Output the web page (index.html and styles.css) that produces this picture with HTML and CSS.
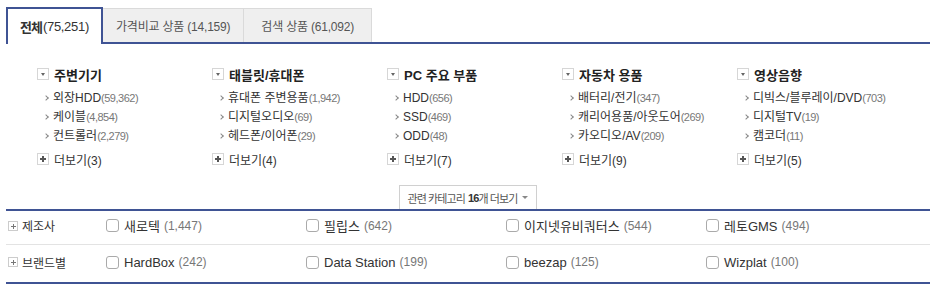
FILE: index.html
```html
<!DOCTYPE html>
<html lang="ko">
<head>
  <meta charset="UTF-8">
  <title>카테고리 필터</title>
  <link rel="stylesheet" href="styles.css">
</head>
<body>
  <div class="wrap">
    <ul class="tabs">
      <li class="tab active"><b>전체</b> (75,251)</li>
      <li class="tab">가격비교 상품 (14,159)</li>
      <li class="tab">검색 상품 (61,092)</li>
    </ul>

    <div class="cats">
      <div class="col">
        <div class="cat-head"><span class="fold"></span>주변기기</div>
        <ul class="items">
          <li>외장HDD<span class="num">(59,362)</span></li>
          <li>케이블<span class="num">(4,854)</span></li>
          <li>컨트롤러<span class="num">(2,279)</span></li>
        </ul>
        <div class="more"><span class="plus"></span>더보기(3)</div>
      </div>
      <div class="col">
        <div class="cat-head"><span class="fold"></span>태블릿/휴대폰</div>
        <ul class="items">
          <li>휴대폰 주변용품<span class="num">(1,942)</span></li>
          <li>디지털오디오<span class="num">(69)</span></li>
          <li>헤드폰/이어폰<span class="num">(29)</span></li>
        </ul>
        <div class="more"><span class="plus"></span>더보기(4)</div>
      </div>
      <div class="col">
        <div class="cat-head"><span class="fold"></span>PC 주요 부품</div>
        <ul class="items">
          <li>HDD<span class="num">(656)</span></li>
          <li>SSD<span class="num">(469)</span></li>
          <li>ODD<span class="num">(48)</span></li>
        </ul>
        <div class="more"><span class="plus"></span>더보기(7)</div>
      </div>
      <div class="col">
        <div class="cat-head"><span class="fold"></span>자동차 용품</div>
        <ul class="items">
          <li>배터리/전기<span class="num">(347)</span></li>
          <li>캐리어용품/아웃도어<span class="num">(269)</span></li>
          <li>카오디오/AV<span class="num">(209)</span></li>
        </ul>
        <div class="more"><span class="plus"></span>더보기(9)</div>
      </div>
      <div class="col">
        <div class="cat-head"><span class="fold"></span>영상음향</div>
        <ul class="items">
          <li>디빅스/블루레이/DVD<span class="num">(703)</span></li>
          <li>디지털TV<span class="num">(19)</span></li>
          <li>캠코더<span class="num">(11)</span></li>
        </ul>
        <div class="more"><span class="plus"></span>더보기(5)</div>
      </div>
    </div>

    <div class="more-bar">
      <button class="more-btn">관련 카테고리 <b>16</b>개 더보기 <span class="caret"></span></button>
    </div>

    <div class="filters">
      <div class="frow">
        <div class="flabel"><span class="fplus"></span>제조사</div>
        <label class="opt"><span class="box"></span>새로텍 <span class="cnt">(1,447)</span></label>
        <label class="opt"><span class="box"></span>필립스 <span class="cnt">(642)</span></label>
        <label class="opt"><span class="box"></span>이지넷유비쿼터스 <span class="cnt">(544)</span></label>
        <label class="opt"><span class="box"></span>레토GMS <span class="cnt">(494)</span></label>
      </div>
      <div class="frow">
        <div class="flabel"><span class="fplus"></span>브랜드별</div>
        <label class="opt"><span class="box"></span>HardBox <span class="cnt">(242)</span></label>
        <label class="opt"><span class="box"></span>Data Station <span class="cnt">(199)</span></label>
        <label class="opt"><span class="box"></span>beezap <span class="cnt">(125)</span></label>
        <label class="opt"><span class="box"></span>Wizplat <span class="cnt">(100)</span></label>
      </div>
    </div>
  </div>
</body>
</html>
```

FILE: styles.css
```css
body {
  margin: 0;
  font-family: "Liberation Sans", "Noto Sans CJK KR", sans-serif;
  color: #333;
  background: #fff;
}
ul {
  list-style: none;
  margin: 0;
  padding: 0;
}
.wrap {
  margin: 7px 5px 0 6px;
}
.tabs {
  display: flex;
  border-bottom: 2px solid #3f5394;
  height: 35px;
}
.tab {
  display: flex;
  align-items: center;
  padding: 0 13px;
  font-size: 12px;
  color: #555;
  background: #efefef;
  border: 1px solid #dadada;
  border-left: none;
  border-bottom: none;
  margin-top: 1px;
  letter-spacing: -0.2px;
}
.tab:last-child {
  padding: 0 17px;
}
.tab.active {
  background: #fff;
  color: #333;
  border: 2px solid #3f5394;
  border-bottom: none;
  margin-top: 0;
  margin-bottom: -2px;
  padding: 0 12px 0 12px;
  font-size: 13px;
  letter-spacing: -0.3px;
}
.tab.active b {
  letter-spacing: -1px;
  margin-right: 1px;
}
.cats {
  display: grid;
  grid-template-columns: repeat(5, 175px);
  padding: 21px 0 0 31px;
}
.cat-head {
  display: flex;
  align-items: center;
  height: 18px;
  font-size: 13px;
  font-weight: bold;
  color: #222;
}
.fold {
  width: 10px;
  height: 10px;
  border: 1px solid #d6d6d6;
  margin-right: 5px;
  position: relative;
}
.fold::after {
  content: "";
  position: absolute;
  left: 3px;
  top: 4px;
  border-left: 2px solid transparent;
  border-right: 2px solid transparent;
  border-top: 3px solid #666;
}
.items {
  margin-top: 6px;
}
.items li {
  height: 19px;
  line-height: 19px;
  font-size: 12px;
  color: #333;
  padding-left: 16px;
  position: relative;
  white-space: nowrap;
}
.items li::before {
  content: "";
  position: absolute;
  left: 7px;
  top: 7px;
  width: 3px;
  height: 3px;
  border-top: 1px solid #888;
  border-right: 1px solid #888;
  transform: rotate(45deg);
}
.num {
  font-size: 11px;
  color: #777;
  letter-spacing: -0.5px;
}
.more {
  display: flex;
  align-items: center;
  height: 18px;
  margin-top: 4px;
  font-size: 12px;
  color: #333;
}
.plus {
  width: 10px;
  height: 10px;
  border: 1px solid #d6d6d6;
  margin-right: 5px;
  position: relative;
}
.plus::before,
.plus::after {
  content: "";
  position: absolute;
  background: #555;
}
.plus::before {
  left: 2px;
  top: 4px;
  width: 6px;
  height: 2px;
}
.plus::after {
  left: 4px;
  top: 2px;
  width: 2px;
  height: 6px;
}
.more-bar {
  display: flex;
  justify-content: center;
  margin-top: 17px;
  border-bottom: 2px solid #3f5394;
}
.more-btn {
  font-family: inherit;
  font-size: 11px;
  color: #555;
  background: #fff;
  border: 1px solid #d0d0d0;
  border-bottom: none;
  height: 24px;
  padding: 0 8px;
  letter-spacing: -0.9px;
  display: flex;
  align-items: center;
}
.more-btn b {
  color: #333;
  margin: 0 0 0 3px;
}
.caret {
  display: inline-block;
  margin-left: 5px;
  border-left: 3px solid transparent;
  border-right: 3px solid transparent;
  border-top: 3px solid #888;
}
.filters {
  border-bottom: 2px solid #3f5394;
}
.frow {
  display: grid;
  grid-template-columns: 100px repeat(4, 200px);
  align-items: center;
  height: 33px;
  padding-bottom: 4px;
  box-sizing: border-box;
}
.frow + .frow {
  border-top: 1px solid #e3e3e3;
  height: 38px;
  padding-bottom: 3px;
}
.flabel {
  display: flex;
  align-items: center;
  font-size: 12px;
  color: #333;
  padding-left: 2px;
}
.fplus {
  width: 8px;
  height: 8px;
  border: 1px solid #ccc;
  margin-right: 4px;
  position: relative;
}
.fplus::before,
.fplus::after {
  content: "";
  position: absolute;
  background: #777;
}
.fplus::before {
  left: 2px;
  top: 4px;
  width: 5px;
  height: 1px;
}
.fplus::after {
  left: 4px;
  top: 2px;
  width: 1px;
  height: 5px;
}
.opt {
  display: flex;
  align-items: center;
  font-size: 13px;
  color: #333;
  white-space: nowrap;
}
.box {
  width: 11px;
  height: 11px;
  border: 1px solid #aaa;
  border-radius: 3px;
  margin-right: 5px;
}
.cnt {
  font-size: 12px;
  color: #777;
  margin-left: 4px;
}
```
